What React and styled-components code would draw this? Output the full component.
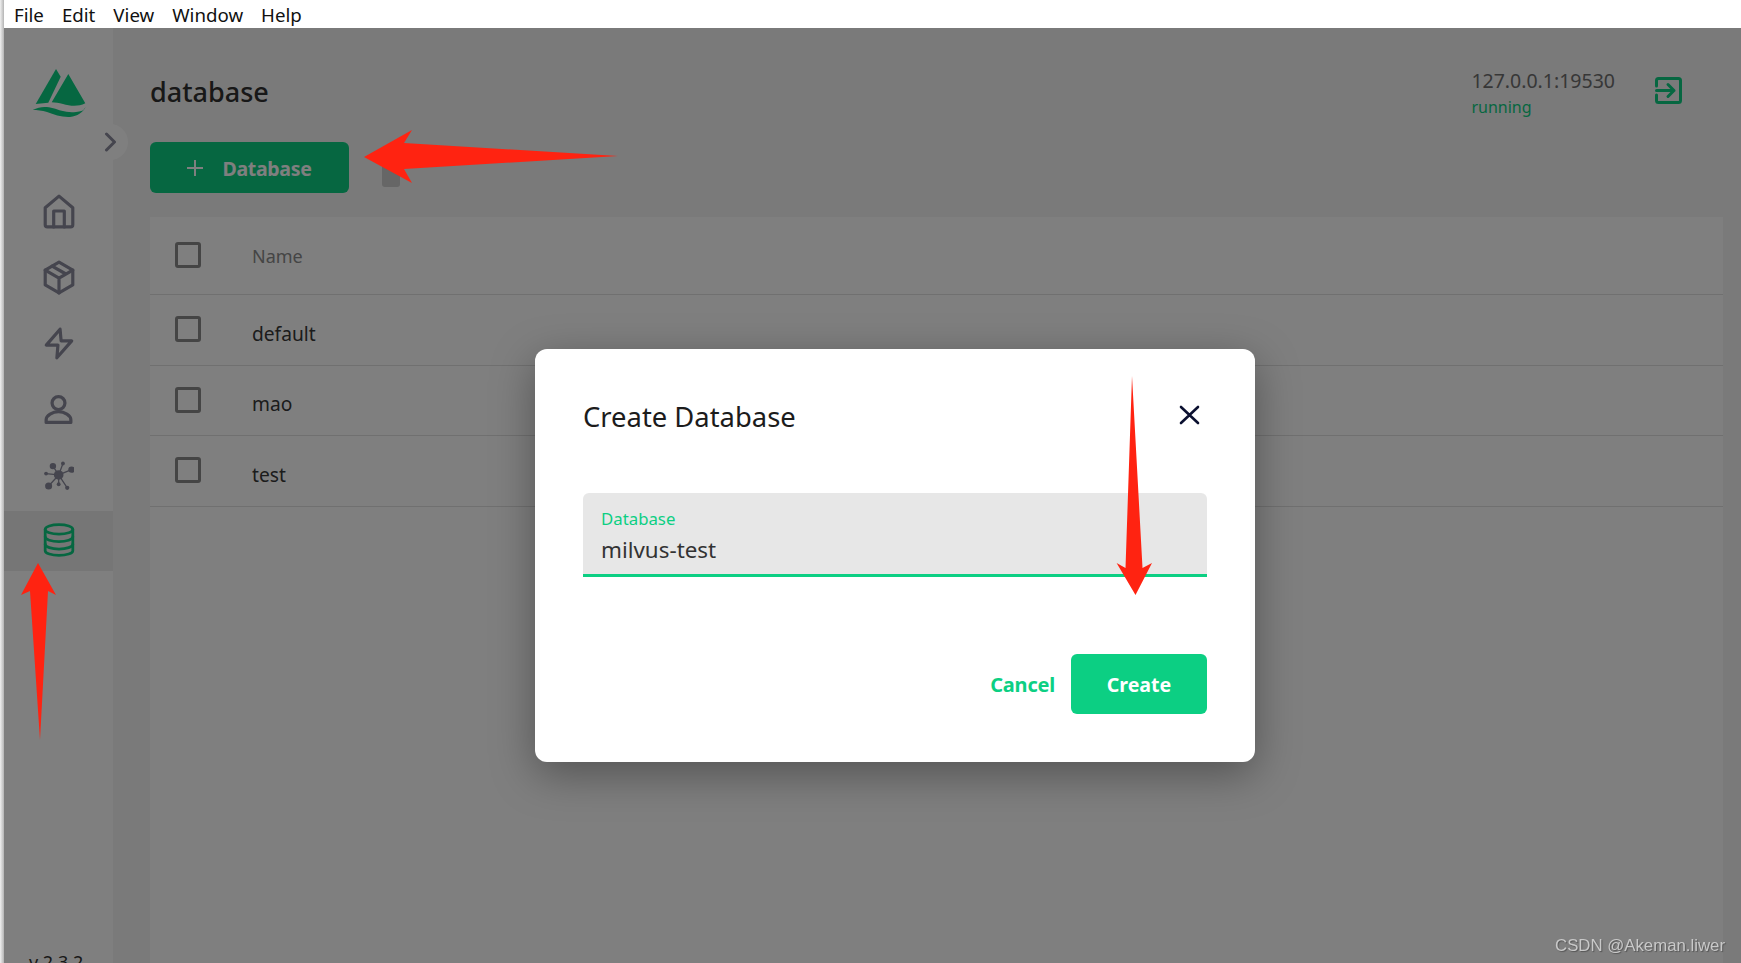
import React from 'react';
import styled, { createGlobalStyle } from 'styled-components';

const GREEN = '#0ccf83';
const ICON = '#8a8a9c';

const Global = createGlobalStyle`
  html, body {
    margin: 0;
    padding: 0;
    height: 100%;
    overflow: hidden;
    background: #fff;
    font-family: "Noto Sans", "Liberation Sans", sans-serif;
  }
  #root { height: 100%; }
  * { box-sizing: border-box; }
`;

const Frame = styled.div`
  display: flex;
  height: 963px;
  overflow: hidden;
`;

const Edge = styled.div`
  flex: 0 0 4px;
  background: linear-gradient(90deg, #f0f0f0, #b4b4b4);
`;

const Shell = styled.div`
  flex: 1;
  display: flex;
  flex-direction: column;
  min-width: 0;
`;

const MenuBar = styled.div`
  flex: 0 0 28px;
  display: flex;
  align-items: center;
  gap: 18px;
  padding-left: 10px;
  background: #fff;
  font-size: 18.7px;
  color: #111;
`;

const Body = styled.div`
  flex: 1;
  position: relative;
  display: flex;
  min-height: 0;
  overflow: hidden;
`;

const Sidebar = styled.aside`
  position: relative;
  flex: 0 0 109px;
  display: flex;
  flex-direction: column;
  background: #fff;
`;

const Logo = styled.svg`
  display: block;
  width: 55px;
  height: 50px;
  margin: 40px 0 63px 28px;
`;

const Toggle = styled.div`
  position: absolute;
  top: 96px;
  right: -15px;
  width: 36px;
  height: 36px;
  border-radius: 50%;
  background: #fff;
  display: flex;
  align-items: center;
  justify-content: center;
  z-index: 1;
`;

const Nav = styled.nav`
  display: flex;
  flex-direction: column;
  gap: 6px;
`;

const NavItem = styled.div`
  height: 60px;
  display: flex;
  align-items: center;
  justify-content: center;
  background: ${p => (p.$active ? '#ececec' : 'transparent')};
  color: ${p => (p.$active ? GREEN : ICON)};
  svg { display: block; }
`;

const Version = styled.div`
  margin: auto 0 -11px 25px;
  font-size: 18px;
  line-height: 24px;
  color: #333;
`;

const Main = styled.main`
  flex: 1;
  min-width: 0;
  display: flex;
  flex-direction: column;
  padding: 42px 18px 0 37px;
  background: #f4f4f4;
`;

const Header = styled.header`
  height: 44px;
  display: flex;
  align-items: flex-start;
  justify-content: space-between;
  padding-right: 41px;
`;

const Title = styled.h1`
  margin: 0;
  font-size: 27px;
  line-height: 44px;
  font-weight: 500;
  color: #303030;
`;

const Connection = styled.div`
  display: flex;
  align-items: flex-start;
  gap: 40px;
  margin-top: -2px;
`;

const Address = styled.div`
  font-size: 19.5px;
  line-height: 26px;
  color: #6e6e6e;
`;

const Running = styled.div`
  font-size: 16px;
  line-height: 26px;
  color: ${GREEN};
`;

const Logout = styled.svg`
  display: block;
  width: 27px;
  height: 27px;
  margin-top: 9px;
  color: ${GREEN};
`;

const Toolbar = styled.div`
  display: flex;
  align-items: center;
  gap: 33px;
  margin: 28px 0 24px;
`;

const AddButton = styled.div`
  width: 199px;
  height: 51px;
  border-radius: 6px;
  background: ${GREEN};
  color: #fff;
  display: flex;
  align-items: center;
  justify-content: center;
  gap: 19px;
  font-size: 19.5px;
  font-weight: 700;
  letter-spacing: -0.3px;
`;

const ButtonLabel = styled.span`
  padding-top: 2px;
`;

const TrashStub = styled.div`
  width: 18px;
  height: 24px;
  margin-top: 14px;
  border-radius: 3px;
  background: #ccc;
`;

const Card = styled.section`
  flex: 1;
  background: #fff;
`;

const Row = styled.div`
  height: ${p => p.$height}px;
  display: flex;
  align-items: center;
  padding-left: 25px;
  border-bottom: 1px solid #e0e0e0;
`;

const Check = styled.span`
  flex: 0 0 26px;
  height: 26px;
  margin: -2px 51px 0 0;
  border: 3px solid #8a8a8a;
  border-radius: 3px;
`;

const Cell = styled.span`
  font-size: ${p => (p.$head ? 18 : 19.2)}px;
  color: ${p => (p.$head ? '#8a8a8a' : '#383838')};
  position: relative;
  top: ${p => (p.$head ? 0 : 3)}px;
`;

const Scrim = styled.div`
  position: absolute;
  inset: 0;
  z-index: 2;
  background: rgba(0, 0, 0, 0.5);
  padding: 321px 0 0 531px;
`;

const Modal = styled.div`
  width: 720px;
  height: 413px;
  padding: 48px;
  border-radius: 12px;
  background: #fff;
  box-shadow: 0 12px 44px rgba(0, 0, 0, 0.35);
`;

const ModalHead = styled.div`
  display: flex;
  justify-content: space-between;
  height: 38px;
`;

const ModalTitle = styled.h2`
  margin: 1px 0 0;
  font-size: 27.4px;
  line-height: 38px;
  font-weight: 400;
  color: #1c1c1c;
`;

const Close = styled.svg`
  display: block;
  width: 21px;
  height: 20px;
  margin: 8px 7px 0 0;
  color: #0b1030;
`;

const Field = styled.div`
  height: 84px;
  margin-top: 58px;
  padding: 15px 18px 0;
  border-radius: 6px 6px 0 0;
  border-bottom: 3px solid ${GREEN};
  background: #e7e7e7;
`;

const FieldLabel = styled.div`
  font-size: 16.8px;
  line-height: 22px;
  color: ${GREEN};
`;

const FieldValue = styled.div`
  margin-top: 4px;
  font-size: 22.4px;
  line-height: 32px;
  color: #333;
`;

const Actions = styled.div`
  display: flex;
  justify-content: flex-end;
  align-items: center;
  gap: 16px;
  margin-top: 77px;
`;

const Cancel = styled.span`
  font-size: 20px;
  font-weight: 700;
  letter-spacing: -0.2px;
  color: ${GREEN};
`;

const Create = styled.div`
  width: 136px;
  height: 60px;
  border-radius: 6px;
  background: ${GREEN};
  color: #fff;
  font-size: 19.6px;
  font-weight: 700;
  display: flex;
  align-items: center;
  justify-content: center;
`;

const Annotations = styled.svg`
  position: fixed;
  left: 0;
  top: 0;
  width: 1741px;
  height: 963px;
  z-index: 5;
  pointer-events: none;
`;

const Watermark = styled.div`
  position: fixed;
  right: 16px;
  bottom: 7px;
  z-index: 6;
  font-family: "Liberation Sans", sans-serif;
  font-size: 16.8px;
  line-height: 20px;
  color: #c9c9c9;
  text-shadow: 1px 1px 1px #555;
`;

const stroke = {
  fill: 'none',
  stroke: 'currentColor',
  strokeWidth: 3,
  strokeLinecap: 'round',
  strokeLinejoin: 'round',
};

const HomeIcon = () => (
  <svg width="32" height="35" viewBox="0 0 30 33" {...stroke}>
    <path d="M2 13 15 2l13 11v16q0 2-2 2H4q-2 0-2-2z" />
    <path d="M10 31V16h10v15" />
  </svg>
);

const BoxIcon = () => (
  <svg width="32" height="35" viewBox="0 0 30 33" {...stroke}>
    <path d="M15 2l13 7.500v14L15 31 2 23.500v-14z" />
    <path d="M2 9.500 15 17l13-7.500M15 17v14M8.500 5.700l13 7.500" />
  </svg>
);

const ZapIcon = () => (
  <svg width="32" height="35" viewBox="0 0 30 33" {...stroke}>
    <path d="M16 3 3 18h11l-1 12 14-16H17z" />
  </svg>
);

const UserIcon = () => (
  <svg width="29" height="29" viewBox="0 0 27 27" {...stroke}>
    <circle cx="13.5" cy="7.5" r="6" />
    <path d="M2 25.500V23c0-4 6-7.500 11.500-7.500S25 19 25 23v2.500z" />
  </svg>
);

const NetworkIcon = () => (
  <svg width="30" height="31" viewBox="0 0 28 29" fill="currentColor" stroke="currentColor">
    <path
      strokeWidth="1.2"
      d="M13.700 14 8.300 5.700M13.700 14l4-10.700M13.700 14l12-5M13.700 14 1.700 12.700M13.700 14 4.300 24.300M13.700 14v8.700M13.700 14l8 12"
    />
    <g stroke="none">
      <circle cx="13.7" cy="14" r="4.5" />
      <circle cx="8.3" cy="5.7" r="3" />
      <circle cx="17.7" cy="3.3" r="1.8" />
      <circle cx="25.7" cy="9" r="3" />
      <circle cx="1.9" cy="12.7" r="1.8" />
      <circle cx="4.3" cy="24.3" r="3.3" />
      <circle cx="13.7" cy="22.7" r="1.8" />
      <circle cx="21.7" cy="26" r="2" />
    </g>
  </svg>
);

const DatabaseIcon = () => (
  <svg width="32" height="34" viewBox="0 0 30 32" {...stroke} strokeWidth="2.600" style={{ marginTop: -3 }}>
    <ellipse cx="15" cy="6" rx="13" ry="4.5" />
    <path d="M2 6v20c0 2.500 6 4.500 13 4.500s13-2 13-4.500V6" />
    <path d="M2 13c0 2.500 6 4.500 13 4.500s13-2 13-4.500M2 20c0 2.500 6 4.500 13 4.500s13-2 13-4.500" />
  </svg>
);

const NAV = [
  { key: 'home', icon: <HomeIcon /> },
  { key: 'box', icon: <BoxIcon /> },
  { key: 'zap', icon: <ZapIcon /> },
  { key: 'user', icon: <UserIcon /> },
  { key: 'net', icon: <NetworkIcon /> },
  { key: 'db', icon: <DatabaseIcon />, active: true },
];

const DATABASES = [
  { name: 'default', height: 71 },
  { name: 'mao', height: 70 },
  { name: 'test', height: 71 },
];

export default function App() {
  return (
    <>
      <Global />
      <Frame>
        <Edge />
        <Shell>
          <MenuBar>
            <span>File</span>
            <span>Edit</span>
            <span>View</span>
            <span>Window</span>
            <span>Help</span>
          </MenuBar>
          <Body>
            <Sidebar>
              <Logo viewBox="0 0 55 50" fill={GREEN}>
                <path d="M24 1l4.700 7.700-12.400 26-12.600 1.300z" />
                <path d="M36.300 6l17 29.300C46 39 38 38 31 36c-4-1-8-1.500-11.300-1.700z" />
                <path d="M.7 42C8 38 15 38.500 21.300 40.300S34 45 44 44s7-3 9.700-4.700C50 45 46 48 38 49c-8 .5-16-2.500-23-5-5-1.500-10-2-14.300-2z" />
              </Logo>
              <Toggle>
                <svg width="13" height="20" viewBox="0 0 13 20" {...stroke} color={ICON}>
                  <path d="M2.500 2l8 8-8 8" />
                </svg>
              </Toggle>
              <Nav>
                {NAV.map(item => (
                  <NavItem key={item.key} $active={item.active}>
                    {item.icon}
                  </NavItem>
                ))}
              </Nav>
              <Version>v 2.3.2</Version>
            </Sidebar>
            <Main>
              <Header>
                <Title>database</Title>
                <Connection>
                  <div>
                    <Address>127.0.0.1:19530</Address>
                    <Running>running</Running>
                  </div>
                  <Logout viewBox="0 0 27 27" {...stroke}>
                    <path d="M1.500 9V3.500q0-2 2-2h20q2 0 2 2v20q0 2-2 2h-20q-2 0-2-2V18" />
                    <path d="M1.500 13.500H19M13 7.500l6 6-6 6" />
                  </Logout>
                </Connection>
              </Header>
              <Toolbar>
                <AddButton>
                  <svg width="16" height="16" viewBox="0 0 16 16" fill="none" stroke="currentColor" strokeWidth="2">
                    <path d="M8 0v16M0 8h16" />
                  </svg>
                  <ButtonLabel>Database</ButtonLabel>
                </AddButton>
                <TrashStub />
              </Toolbar>
              <Card>
                <Row $height={78}>
                  <Check />
                  <Cell $head>Name</Cell>
                </Row>
                {DATABASES.map(db => (
                  <Row key={db.name} $height={db.height}>
                    <Check />
                    <Cell>{db.name}</Cell>
                  </Row>
                ))}
              </Card>
            </Main>
            <Scrim>
              <Modal>
                <ModalHead>
                  <ModalTitle>Create Database</ModalTitle>
                  <Close viewBox="0 0 21 20" fill="none" stroke="currentColor" strokeWidth="2.600" strokeLinecap="round">
                    <path d="M2 2l17 16M19 2 2 18" />
                  </Close>
                </ModalHead>
                <Field>
                  <FieldLabel>Database</FieldLabel>
                  <FieldValue>milvus-test</FieldValue>
                </Field>
                <Actions>
                  <Cancel>Cancel</Cancel>
                  <Create>Create</Create>
                </Actions>
              </Modal>
            </Scrim>
          </Body>
        </Shell>
      </Frame>
      <Annotations viewBox="0 0 1741 963" fill="#ff2311">
        <polygon points="364,157 412,130 404,143 618,156 404,169 412,183" />
        <polygon points="1132,376 1142.500,568 1152,563 1135.500,595 1116.600,563 1125.500,568" />
        <polygon points="38,563 56,595 48,591 40,740 30,591 21,595" />
      </Annotations>
      <Watermark>CSDN @Akeman.liwer</Watermark>
    </>
  );
}
